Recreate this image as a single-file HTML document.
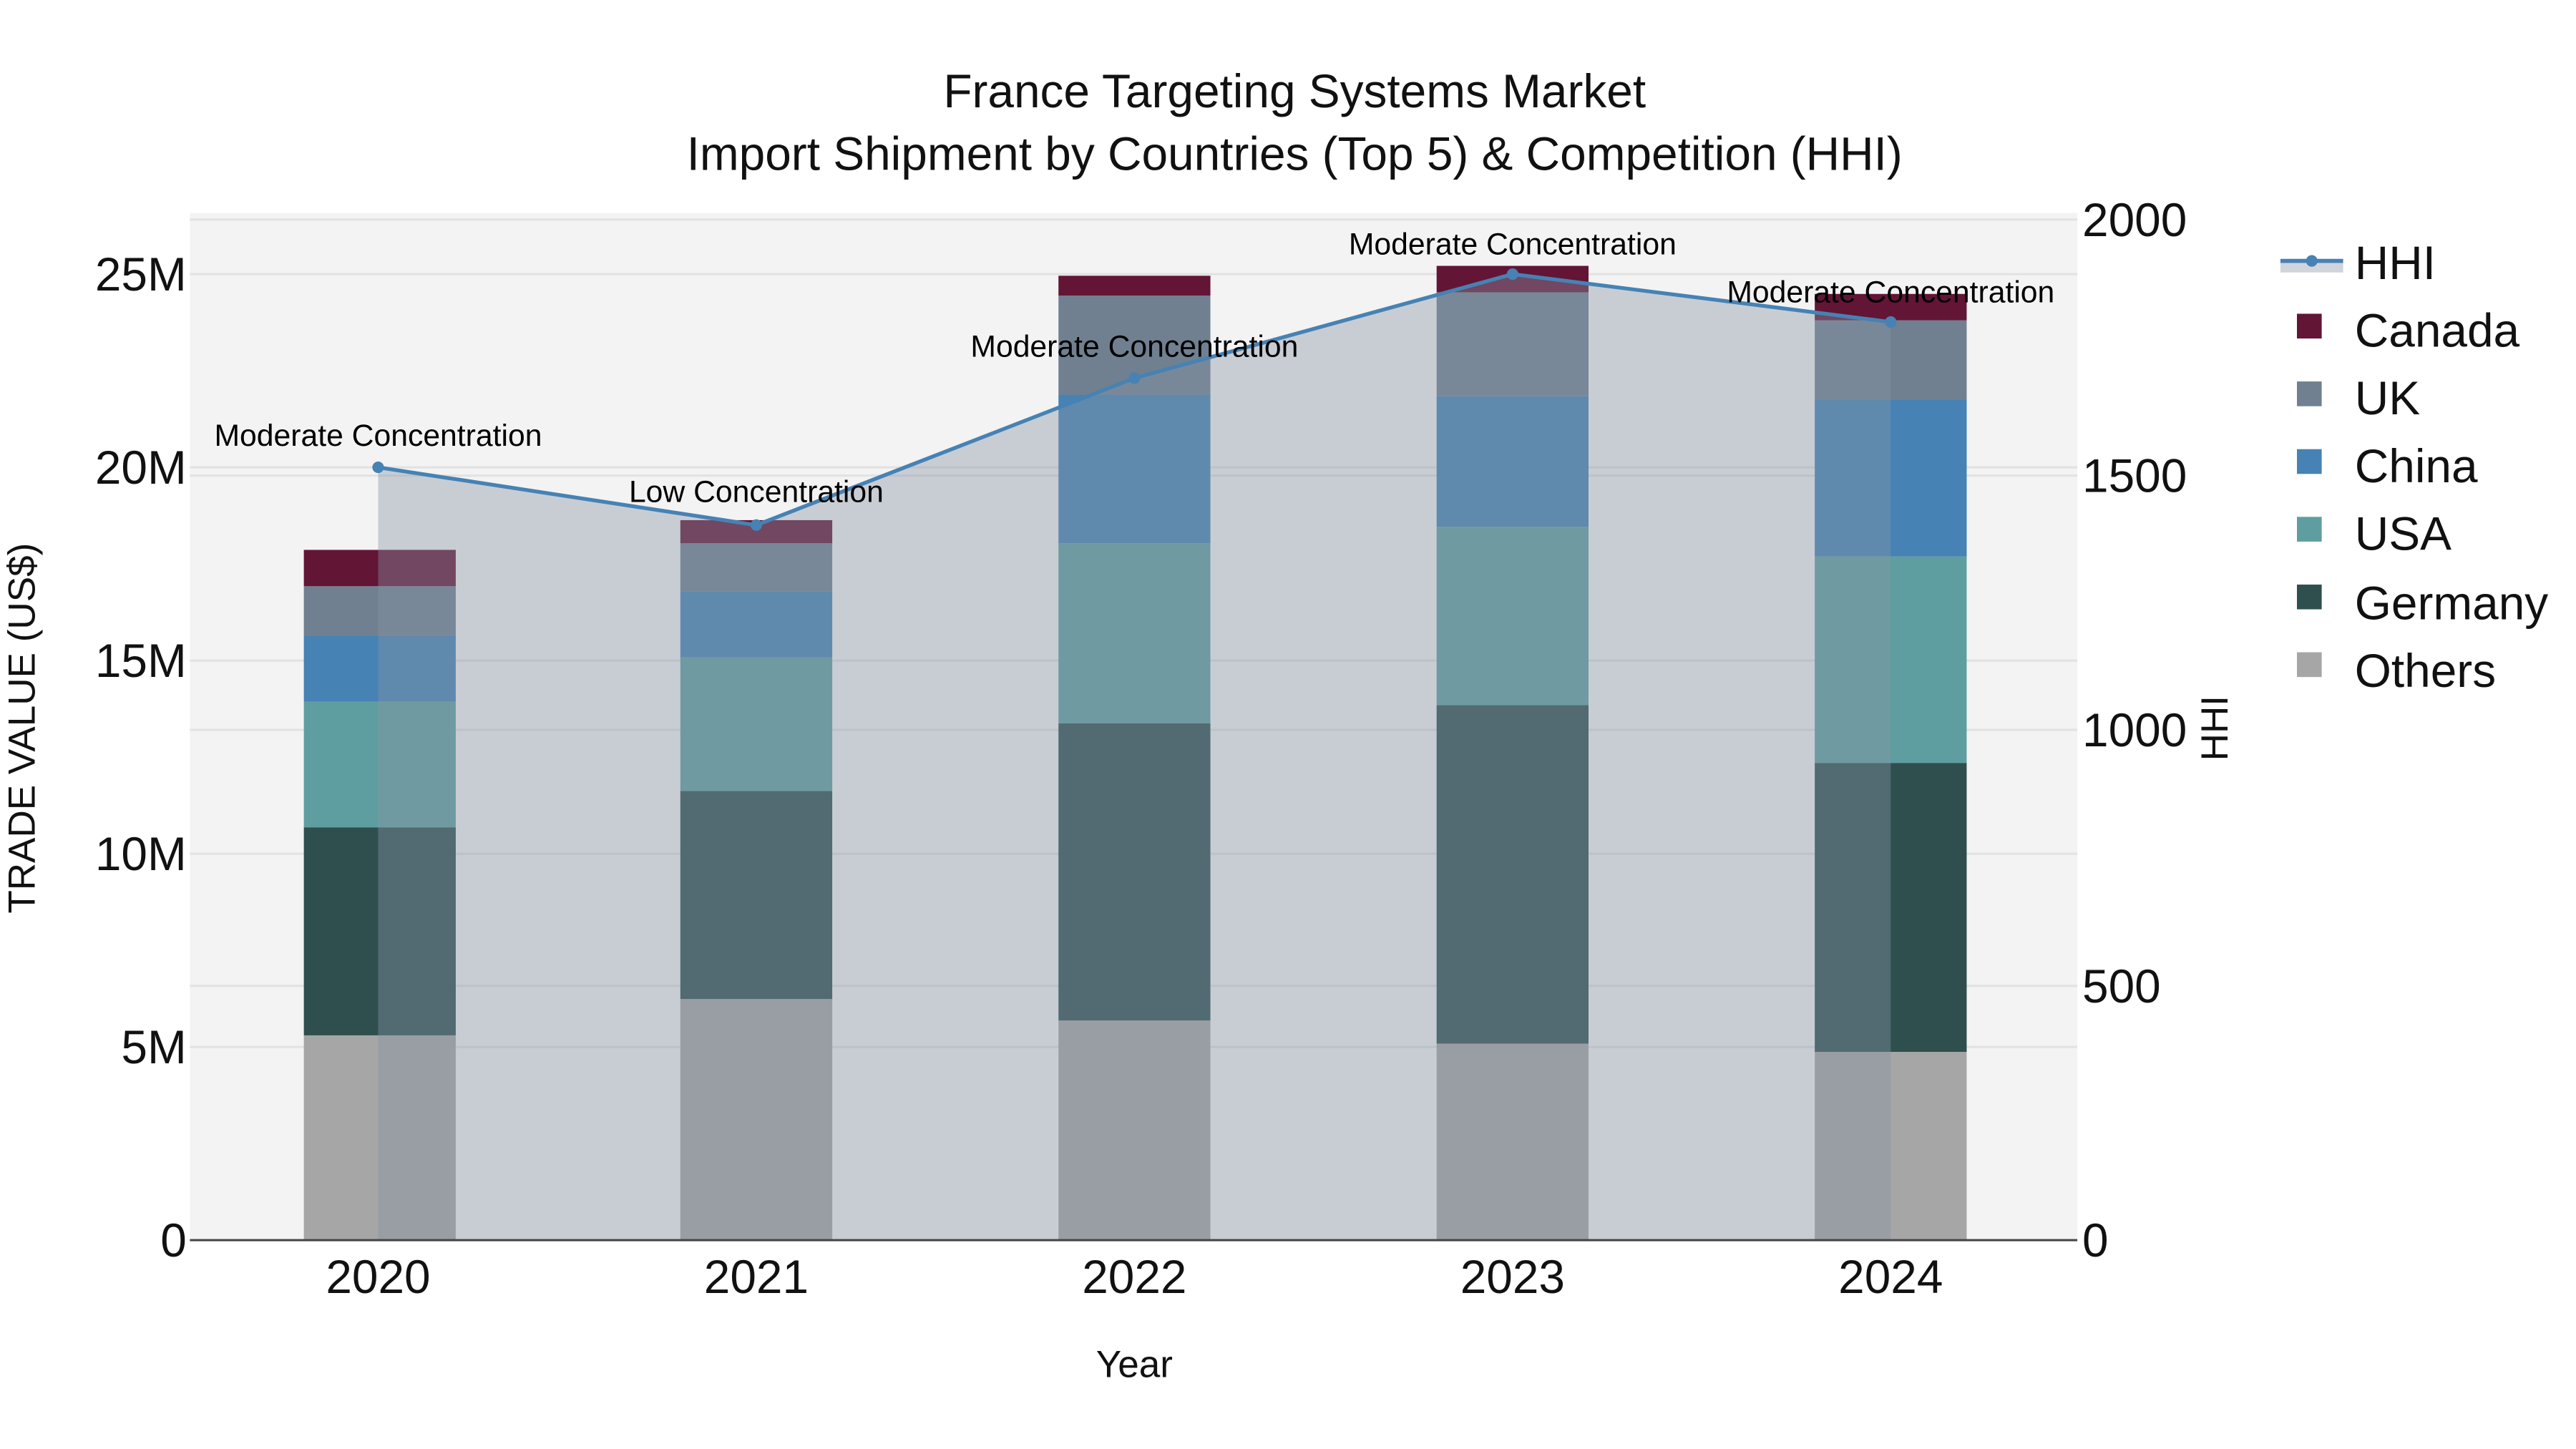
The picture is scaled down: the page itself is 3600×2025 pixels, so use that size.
<!DOCTYPE html>
<html><head><meta charset="utf-8"><style>html,body{margin:0;padding:0;background:#fff}svg{display:block}</style></head>
<body>
<svg width="3600" height="2025" viewBox="0 0 1560 877.5" xmlns="http://www.w3.org/2000/svg" font-family="Liberation Sans, sans-serif">
<rect width="1560" height="877.5" fill="#fff"/>
<rect x="115" y="129" width="1143" height="622" fill="#f3f3f3"/>
<g stroke="#e2e2e2" stroke-width="1.3">
<line x1="115" x2="1258" y1="166" y2="166"/><line x1="115" x2="1258" y1="283" y2="283"/><line x1="115" x2="1258" y1="400" y2="400"/><line x1="115" x2="1258" y1="517" y2="517"/><line x1="115" x2="1258" y1="634" y2="634"/>
<line x1="115" x2="1258" y1="133" y2="133"/><line x1="115" x2="1258" y1="288" y2="288"/><line x1="115" x2="1258" y1="442" y2="442"/><line x1="115" x2="1258" y1="597" y2="597"/>
</g>
<g>
<rect x="184" y="627" width="92" height="124" fill="#a6a6a6"/><rect x="184" y="501" width="92" height="126" fill="#2f4f4f"/><rect x="184" y="425" width="92" height="76" fill="#5f9ea0"/><rect x="184" y="385" width="92" height="40" fill="#4682b4"/><rect x="184" y="355" width="92" height="30" fill="#708090"/><rect x="184" y="333" width="92" height="22" fill="#631536"/>
<rect x="412" y="605" width="92" height="146" fill="#a6a6a6"/><rect x="412" y="479" width="92" height="126" fill="#2f4f4f"/><rect x="412" y="398" width="92" height="81" fill="#5f9ea0"/><rect x="412" y="358" width="92" height="40" fill="#4682b4"/><rect x="412" y="329" width="92" height="29" fill="#708090"/><rect x="412" y="315" width="92" height="14" fill="#631536"/>
<rect x="641" y="618" width="92" height="133" fill="#a6a6a6"/><rect x="641" y="438" width="92" height="180" fill="#2f4f4f"/><rect x="641" y="329" width="92" height="109" fill="#5f9ea0"/><rect x="641" y="239" width="92" height="90" fill="#4682b4"/><rect x="641" y="179" width="92" height="60" fill="#708090"/><rect x="641" y="167" width="92" height="12" fill="#631536"/>
<rect x="870" y="632" width="92" height="119" fill="#a6a6a6"/><rect x="870" y="427" width="92" height="205" fill="#2f4f4f"/><rect x="870" y="319" width="92" height="108" fill="#5f9ea0"/><rect x="870" y="240" width="92" height="79" fill="#4682b4"/><rect x="870" y="177" width="92" height="63" fill="#708090"/><rect x="870" y="161" width="92" height="16" fill="#631536"/>
<rect x="1099" y="637" width="92" height="114" fill="#a6a6a6"/><rect x="1099" y="462" width="92" height="175" fill="#2f4f4f"/><rect x="1099" y="337" width="92" height="125" fill="#5f9ea0"/><rect x="1099" y="242" width="92" height="95" fill="#4682b4"/><rect x="1099" y="194" width="92" height="48" fill="#708090"/><rect x="1099" y="178" width="92" height="16" fill="#631536"/>
</g>
<polygon points="229,283 458,318 687,229 916,166 1145,195 1145,751 229,751" fill="rgb(136,148,165)" fill-opacity="0.4"/>
<polyline points="229,283 458,318 687,229 916,166 1145,195" fill="none" stroke="#4682b4" stroke-width="2.3"/>
<g fill="#4682b4"><circle cx="229" cy="283" r="3.5"/><circle cx="458" cy="318" r="3.5"/><circle cx="687" cy="229" r="3.5"/><circle cx="916" cy="166" r="3.5"/><circle cx="1145" cy="195" r="3.5"/></g>
<line x1="115" x2="1258" y1="751" y2="751" stroke="#444" stroke-width="1.3"/>
<g font-size="18.5" fill="#000" text-anchor="middle">
<text x="229" y="270">Moderate Concentration</text>
<text x="458" y="304">Low Concentration</text>
<text x="687" y="216">Moderate Concentration</text>
<text x="916" y="154">Moderate Concentration</text>
<text x="1145" y="183">Moderate Concentration</text>
</g>
<g font-size="28.5" fill="#111">
<text x="784" y="65" text-anchor="middle">France Targeting Systems Market</text>
<text x="784" y="103" text-anchor="middle">Import Shipment by Countries (Top 5) &amp; Competition (HHI)</text>
<g text-anchor="end"><text x="113" y="761">0</text><text x="113" y="644">5M</text><text x="113" y="527">10M</text><text x="113" y="410">15M</text><text x="113" y="293">20M</text><text x="113" y="176">25M</text></g>
<g text-anchor="start"><text x="1261" y="761">0</text><text x="1261" y="607">500</text><text x="1261" y="452">1000</text><text x="1261" y="298">1500</text><text x="1261" y="143">2000</text></g>
<g text-anchor="middle"><text x="229" y="783">2020</text><text x="458" y="783">2021</text><text x="687" y="783">2022</text><text x="916" y="783">2023</text><text x="1145" y="783">2024</text></g>
</g>
<text x="687" y="834" font-size="23" text-anchor="middle" fill="#111">Year</text>
<text transform="translate(21,441) rotate(-90)" font-size="23" text-anchor="middle" fill="#111">TRADE VALUE (US$)</text>
<text transform="translate(1349,441) rotate(-90)" font-size="23" text-anchor="middle" fill="#111">HHI</text>
<g>
<rect x="1381" y="159" width="38" height="6" fill="#d0d5dc"/>
<line x1="1381" x2="1419" y1="158" y2="158" stroke="#4682b4" stroke-width="2.5"/>
<circle cx="1400" cy="158" r="3.5" fill="#4682b4"/>
<rect x="1391" y="190" width="15" height="15" fill="#631536"/>
<rect x="1391" y="231" width="15" height="15" fill="#708090"/>
<rect x="1391" y="272" width="15" height="15" fill="#4682b4"/>
<rect x="1391" y="313" width="15" height="15" fill="#5f9ea0"/>
<rect x="1391" y="354" width="15" height="15" fill="#2f4f4f"/>
<rect x="1391" y="395" width="15" height="15" fill="#a6a6a6"/>
<g font-size="28.5" fill="#111">
<text x="1426" y="169">HHI</text><text x="1426" y="210">Canada</text><text x="1426" y="251">UK</text><text x="1426" y="292">China</text><text x="1426" y="333">USA</text><text x="1426" y="375">Germany</text><text x="1426" y="416">Others</text>
</g>
</g>
</svg>
</body></html>
